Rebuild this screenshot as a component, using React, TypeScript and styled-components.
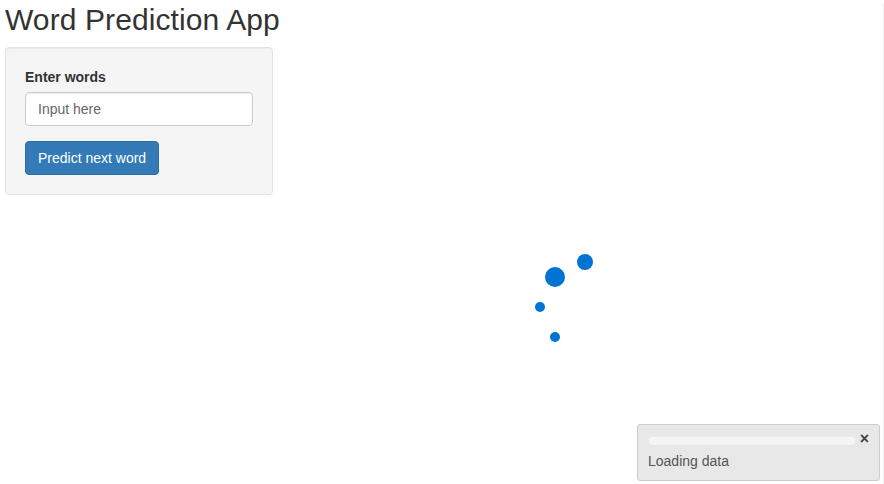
import React from "react";
import styled, { createGlobalStyle } from "styled-components";

const GlobalStyle = createGlobalStyle`
  html, body { margin: 0; padding: 0; background: #fff; }
  body {
    font-family: "Liberation Sans", Arial, sans-serif;
    font-size: 14px;
    line-height: 1.42857;
    color: #333;
  }
  * { box-sizing: border-box; }
`;

const Page = styled.div`
  padding: 0 5px;
  min-height: 484px;
  border-right: 1px solid #f1f1f1;
`;

const Title = styled.h2`
  margin: 3px 0 11px;
  font-size: 30px;
  font-weight: 400;
  line-height: 1.1;
  letter-spacing: 0.1px;
  color: #333;
`;

const Well = styled.div`
  width: 268px;
  padding: 19px;
  background: #f5f5f5;
  border: 1px solid #e3e3e3;
  border-radius: 4px;
  box-shadow: inset 0 1px 1px rgba(0, 0, 0, 0.05);
`;

const FormGroup = styled.div`
  display: flex;
  flex-direction: column;
  margin-bottom: 15px;
`;

const Label = styled.label`
  font-weight: 700;
  margin-bottom: 5px;
  line-height: 20px;
`;

const Input = styled.input`
  width: 100%;
  height: 34px;
  padding: 6px 12px;
  font-family: inherit;
  font-size: 14px;
  color: #555;
  background: #fff;
  border: 1px solid #ccc;
  border-radius: 4px;
  box-shadow: inset 0 1px 1px rgba(0, 0, 0, 0.075);
  outline: none;
  &::placeholder { color: #666; }
`;

const Button = styled.button`
  display: inline-block;
  height: 34px;
  padding: 6px 12px;
  font-family: inherit;
  font-size: 14px;
  line-height: 20px;
  color: #fff;
  background: #337ab7;
  border: 1px solid #2e6da4;
  border-radius: 4px;
  cursor: pointer;
`;

const Spinner = styled.svg`
  position: fixed;
  left: 528px;
  top: 250px;
`;

const Notification = styled.div`
  position: fixed;
  right: 4px;
  bottom: 3px;
  width: 243px;
  padding: 12px 24px 9px 10px;
  display: flex;
  flex-direction: column;
  gap: 6px;
  background: #e8e8e8;
  border: 1px solid #ccc;
  border-radius: 3px;
  color: #555;
`;

const Progress = styled.div`
  height: 8px;
  margin-left: 1px;
  background: #f5f5f5;
  border-radius: 4px;
`;

const NoteText = styled.div`
  line-height: 20px;
  font-size: 14px;
  color: #555;
`;

const Close = styled.span`
  position: absolute;
  top: 6px;
  right: 10px;
  font-size: 16px;
  font-weight: 700;
  color: #444;
  line-height: 1;
`;

const dots = [
  { x: 27, y: 27, r: 10 },
  { x: 57, y: 12, r: 8 },
  { x: 12, y: 57, r: 5 },
  { x: 27, y: 87, r: 5 },
];

export default function App() {
  return (
    <>
      <GlobalStyle />
      <Page>
        <Title>Word Prediction App</Title>
        <Well>
          <FormGroup>
            <Label htmlFor="words">Enter words</Label>
            <Input id="words" placeholder="Input here" />
          </FormGroup>
          <Button>Predict next word</Button>
        </Well>
      </Page>
      <Spinner width="70" height="100" viewBox="0 0 70 100">
        {dots.map((d, i) => (
          <circle key={i} cx={d.x} cy={d.y} r={d.r} fill="#0173d2" />
        ))}
      </Spinner>
      <Notification>
        <Close>×</Close>
        <Progress />
        <NoteText>Loading data</NoteText>
      </Notification>
    </>
  );
}
